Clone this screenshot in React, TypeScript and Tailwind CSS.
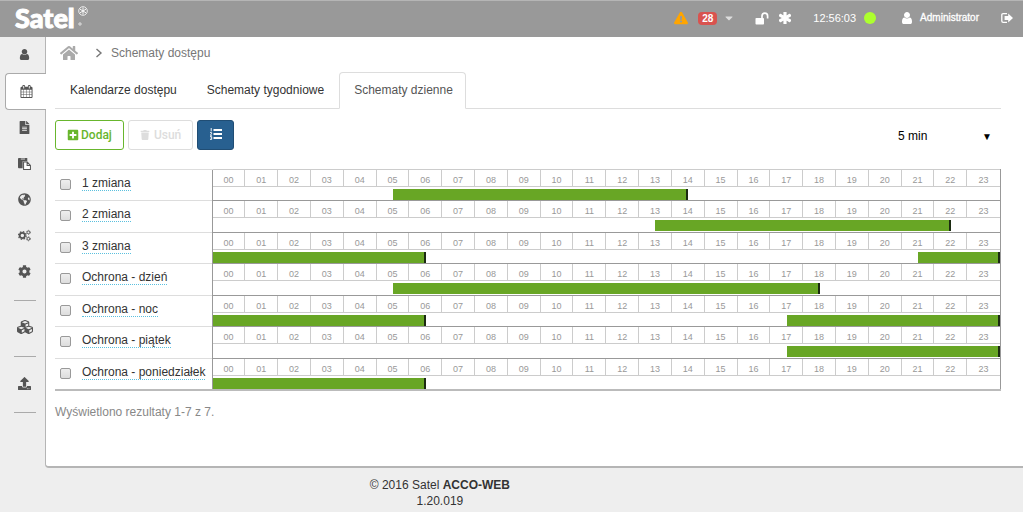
import React from 'react';
import { clsx } from 'clsx';
import {
  FaAsterisk,
  FaCaretDown,
  FaCog,
  FaCubes,
  FaExclamationTriangle,
  FaFileAlt,
  FaGlobeAmericas,
  FaHome,
  FaPlusSquare,
  FaTrash,
  FaUpload,
} from 'react-icons/fa';

type IconProps = { className?: string };

const UserIcon = ({ className }: IconProps) => (
  <svg className={className} viewBox="0 0 1792 1792" fill="currentColor" aria-hidden="true">
    <path d="M1536 1399q0 109-62.5 187t-150.5 78h-854q-88 0-150.5-78t-62.5-187q0-85 8.5-160.5t31.5-152 58.5-131 94-89 134.5-34.5q131 128 313 128t313-128q76 0 134.5 34.5t94 89 58.5 131 31.5 152 8.5 160.5zm-256-887q0 159-112.5 271.5t-271.5 112.5-271.5-112.5-112.5-271.5 112.5-271.5 271.5-112.5 271.5 112.5 112.5 271.5z" />
  </svg>
);

const CalendarIcon = ({ className }: IconProps) => (
  <svg className={className} viewBox="0 0 1792 1792" fill="currentColor" aria-hidden="true">
    <path d="M192 1664h288v-288h-288v288zm352 0h320v-288h-320v288zm-352-352h288v-320h-288v320zm352 0h320v-320h-320v320zm-352-384h288v-288h-288v288zm736 736h320v-288h-320v288zm-384-736h320v-288h-320v288zm768 736h288v-288h-288v288zm-384-352h320v-320h-320v320zm-352-864v-288q0-13-9.5-22.5t-22.5-9.5h-64q-13 0-22.5 9.5t-9.5 22.5v288q0 13 9.5 22.5t22.5 9.5h64q13 0 22.5-9.5t9.5-22.5zm736 864h288v-320h-288v320zm-384-384h320v-288h-320v288zm384 0h288v-288h-288v288zm32-480v-288q0-13-9.5-22.5t-22.5-9.5h-64q-13 0-22.5 9.5t-9.5 22.5v288q0 13 9.5 22.5t22.5 9.5h64q13 0 22.5-9.5t9.5-22.5zm384-64v1280q0 52-38 90t-90 38h-1408q-52 0-90-38t-38-90v-1280q0-52 38-90t90-38h128v-96q0-66 47-113t113-47h64q66 0 113 47t47 113v96h384v-96q0-66 47-113t113-47h64q66 0 113 47t47 113v96h128q52 0 90 38t38 90z" />
  </svg>
);

const PasteIcon = ({ className }: IconProps) => (
  <svg className={className} viewBox="0 0 14 14" aria-hidden="true">
    <path d="M1 1h9v3.5H5V12H1q-1 0-1-1V2q0-1 1-1z" fill="currentColor" />
    <path d="M3 2.2h4.5" stroke="white" strokeWidth="0.8" />
    <path d="M6 5.5h4L13.4 9v4.4H6zM9.8 5.5v3.7h3.6" fill="white" stroke="currentColor" strokeWidth="1.1" />
  </svg>
);

const CogsIcon = ({ className }: IconProps) => (
  <svg className={className} viewBox="0 0 15 14" fill="none" stroke="currentColor" aria-hidden="true">
    <circle cx="5" cy="7" r="3" strokeWidth="2" />
    <circle cx="5" cy="7" r="4.4" strokeWidth="1.4" strokeDasharray="1.8 1.656" />
    <circle cx="12" cy="3.4" r="1.6" strokeWidth="1.1" />
    <circle cx="12" cy="3.4" r="2.4" strokeWidth="0.8" strokeDasharray="1.2 1.313" />
    <circle cx="12" cy="10.8" r="1.6" strokeWidth="1.1" />
    <circle cx="12" cy="10.8" r="2.4" strokeWidth="0.8" strokeDasharray="1.2 1.313" />
  </svg>
);

const UnlockIcon = ({ className }: IconProps) => (
  <svg className={className} viewBox="0 0 14 13" fill="none" aria-hidden="true">
    <rect x="0.5" y="6" width="8.5" height="6.5" rx="0.8" fill="currentColor" />
    <path d="M7 6.5V4q0-2.8 2.8-2.8T12.6 4v2.4" stroke="currentColor" strokeWidth="1.7" />
  </svg>
);

const ListIcon = ({ className }: IconProps) => (
  <svg className={className} viewBox="0 0 12 12" fill="none" stroke="currentColor" aria-hidden="true">
    <path d="M3.5 2H12M3.5 6H12M3.5 10H12" strokeWidth="2" />
    <path d="M1.2 0v3.4M0 4.6h1.6v1.2L.2 7.2h1.8M0 8.6h1.7v2.8H0M.6 10h1" strokeWidth="0.9" />
  </svg>
);

const LogOutIcon = ({ className }: IconProps) => (
  <svg className={className} viewBox="0 0 12 12" fill="none" aria-hidden="true">
    <path d="M6 1.7H2.2Q.8 1.7.8 3v6q0 1.3 1.4 1.3H6" stroke="currentColor" strokeWidth="1.3" />
    <path d="M7.2 1.4 12 6l-4.8 4.6V7.9H3.6V4.1h3.6z" fill="currentColor" />
  </svg>
);

const Logo = () => (
  <a href="#start" aria-label="Satel" className="flex items-start pb-0.5 text-white">
    <span className="font-[Lato,sans-serif] text-[27px] leading-6 font-black [-webkit-text-stroke:1px_white]">Satel</span>
    <svg className="ml-0.5 h-5 w-3" viewBox="0 0 12 20" fill="none" stroke="currentColor" aria-hidden="true">
      <circle cx="6" cy="5" r="4.3" strokeWidth="0.8" />
      <path d="M6 1.5v7M3 3.2l6 3.6M9 3.2 3 6.8" strokeWidth="0.9" />
      <circle cx="3" cy="18" r="1.2" strokeWidth="0.7" />
    </svg>
  </a>
);

const MENU = [
  { id: 'uzytkownicy', icon: UserIcon },
  { id: 'kalendarze', icon: CalendarIcon, active: true },
  { id: 'raporty', icon: FaFileAlt },
  { id: 'szablony', icon: PasteIcon },
  { id: 'mapa', icon: FaGlobeAmericas },
  { id: 'konfiguracja', icon: CogsIcon },
  { id: 'ustawienia', icon: FaCog, divider: true },
  { id: 'moduly', icon: FaCubes, divider: true },
  { id: 'import', icon: FaUpload, divider: true },
];

const TABS = ['Kalendarze dostępu', 'Schematy tygodniowe', 'Schematy dzienne'];

const HOURS = Array.from({ length: 24 }, (_, h) => String(h).padStart(2, '0'));

// ranges are given in hours
const SCHEMES: { name: string; ranges: [number, number][] }[] = [
  { name: '1 zmiana', ranges: [[5.5, 14.5]] },
  { name: '2 zmiana', ranges: [[13.5, 22.5]] },
  { name: '3 zmiana', ranges: [[0, 6.5], [21.5, 24]] },
  { name: 'Ochrona - dzień', ranges: [[5.5, 18.5]] },
  { name: 'Ochrona - noc', ranges: [[0, 6.5], [17.5, 24]] },
  { name: 'Ochrona - piątek', ranges: [[17.5, 24]] },
  { name: 'Ochrona - poniedziałek', ranges: [[0, 6.5]] },
];

const percent = (hours: number) => `${(hours / 24) * 100}%`;

const Timeline = ({ ranges }: { ranges: [number, number][] }) => (
  <div>
    <div className="grid h-[17px] grid-cols-24 border-b border-[#ccc]">
      {HOURS.map((hour) => (
        <span key={hour} className="h-4 border-r border-[#ccc] text-center text-[9px] leading-5 text-[#999] last:border-r-0">
          {hour}
        </span>
      ))}
    </div>
    <div className="flex pt-0.5">
      {ranges.map(([from, to], i) => (
        <div
          key={from}
          className="h-[11px] shrink-0 border-r-2 border-[#1c2b12] bg-[#68a625]"
          style={{ marginLeft: percent(from - (i ? ranges[i - 1][1] : 0)), width: percent(to - from) }}
        />
      ))}
    </div>
  </div>
);

const TopBar = () => (
  <header className="flex h-[37px] items-center justify-between border-t border-[#b5b5b5] bg-[#999] pr-2.5 pl-[15px] text-white">
    <Logo />
    <div className="flex items-center pb-0.5 text-[11px]">
      <FaExclamationTriangle className="size-3.5 text-[#ffa500]" />
      <button type="button" className="ml-2.5 flex items-center gap-1.5">
        <span className="rounded-sm bg-[#d9534f] px-1 text-[10px] leading-[13px] font-bold">28</span>
        <FaCaretDown className="size-3 text-[#ddd]" />
      </button>
      <UnlockIcon className="ml-5 h-[13px] w-3.5" />
      <FaAsterisk className="ml-2.5 size-3" stroke="currentColor" strokeWidth={50} />
      <span className="ml-[22px] leading-4">12:56:03</span>
      <span className="ml-2 size-3 rounded-full bg-[#adff2f]" />
      <UserIcon className="ml-6 size-3.5" />
      <span className="ml-1.5 text-[10px] leading-4 [-webkit-text-stroke:0.3px_white]">Administrator</span>
      <button type="button" aria-label="Wyloguj" className="ml-[22px]">
        <LogOutIcon className="size-3" />
      </button>
    </div>
  </header>
);

const SideBar = () => (
  <nav className="relative z-10 flex w-[45px] shrink-0 flex-col text-[#555]">
    {MENU.map(({ id, icon: Icon, active, divider }) => (
      <React.Fragment key={id}>
        <a
          href={`#${id}`}
          aria-label={id}
          className={clsx(
            'flex items-center justify-center',
            active
              ? '-mr-px ml-[5px] h-[37px] rounded-l border border-r-0 border-[#aaa] bg-white'
              : 'h-9 pb-0.5 pl-1',
          )}
        >
          <Icon className={id === 'moduly' ? 'size-4' : 'size-[13px]'} />
        </a>
        {divider && (
          <div className="flex h-5 items-center pl-3.5">
            <hr className="w-[22px] border-[#aaa]" />
          </div>
        )}
      </React.Fragment>
    ))}
  </nav>
);

export default function App() {
  return (
    <div className="min-h-screen bg-[#eee] font-['Liberation_Sans',Arial,sans-serif] text-[12px] text-[#333]">
      <TopBar />
      <div className="flex items-start">
        <SideBar />
        <main className="min-w-0 flex-1 rounded-bl border-b-2 border-l border-[#b5b5b5] bg-white pr-[22px] pb-[46px] pl-[9px]">
          <div className="flex h-[35px] items-center pb-1 text-[#777]">
            <a href="#start" aria-label="Start" className="ml-[5px] text-[#aaa]">
              <FaHome className="size-[18px]" />
            </a>
            <svg className="ml-[17px] h-2.5 w-2" viewBox="0 0 8 10" fill="none" stroke="currentColor" strokeWidth="1.4" aria-hidden="true">
              <path d="M1.5 1 6 5 1.5 9" />
            </svg>
            <span className="ml-2">Schematy dostępu</span>
          </div>

          <div className="flex gap-0.5 border-b border-[#ddd]">
            {TABS.map((tab, i) => (
              <a
                key={tab}
                href={`#tab-${i}`}
                className={clsx(
                  '-mb-px flex h-[37px] items-center rounded-t border pr-3 pb-0.5 pl-3.5',
                  i === 2 ? 'border-[#ddd] border-b-white bg-white text-[#555]' : 'border-transparent',
                )}
              >
                {tab}
              </a>
            ))}
          </div>

          <div className="mt-[11px] flex h-[30px] items-center gap-1 font-[Roboto,sans-serif] text-[12px]">
            <button type="button" className="flex h-full items-center gap-0.5 rounded-[3px] border border-[#68b62d] px-[11px] font-medium text-[#68b62d]">
              <FaPlusSquare className="size-3" />
              Dodaj
            </button>
            <button type="button" disabled className="flex h-full items-center gap-1 rounded-[3px] border border-[#ddd] px-[11px] font-medium text-[#ddd]">
              <FaTrash className="size-2.5" />
              Usuń
            </button>
            <button type="button" aria-label="Lista" className="flex h-full w-[37px] items-center justify-center rounded-[3px] border border-[#204d74] bg-[#286090] pb-0.5 text-white">
              <ListIcon className="size-3" />
            </button>
            <div className="relative ml-auto flex items-center pt-0.5 font-['Liberation_Sans',Arial,sans-serif] text-[12px] text-black">
              <select aria-label="Dokładność" className="w-[108px] appearance-none bg-transparent pl-[5px] leading-4">
                <option>5 min</option>
              </select>
              <span className="pointer-events-none absolute right-[9px] text-[10px]">▼</span>
            </div>
          </div>

          <table className="mt-[19px] w-full table-fixed border-collapse">
            <tbody>
              {SCHEMES.map(({ name, ranges }, i) => (
                <tr key={name} className="h-[31px] even:h-8">
                  <td className={clsx('w-[157px] border-t border-[#ddd] p-0 align-top', i === 6 && 'border-b-2 border-b-[#bbb]')}>
                    <div className="flex items-center pt-[7px]">
                      <input
                        id={`scheme-${i}`}
                        type="checkbox"
                        className="ml-[5px] size-[11px] appearance-none rounded-xs border border-[#999] bg-linear-to-b from-[#eee] to-[#ddd]"
                      />
                      <label htmlFor={`scheme-${i}`} className="ml-[11px] border-b border-dotted border-[#5bc0de] leading-[13px] whitespace-nowrap">
                        {name}
                      </label>
                    </div>
                  </td>
                  <td className={clsx('border-x border-x-[#999] p-0 align-top', i ? 'border-t border-t-[#999]' : 'border-t border-t-[#ccc]', i === 6 && 'border-b-2 border-b-[#bbb]')}>
                    <Timeline ranges={ranges} />
                  </td>
                </tr>
              ))}
            </tbody>
          </table>

          <p className="mt-[13px] leading-4 text-[#888]">Wyświetlono rezultaty 1-7 z 7.</p>
        </main>
      </div>
      <footer className="w-[86%] pt-[9px] text-center leading-4">
        <p>
          © 2016 Satel <b>ACCO-WEB</b>
        </p>
        <p>1.20.019</p>
      </footer>
    </div>
  );
}
